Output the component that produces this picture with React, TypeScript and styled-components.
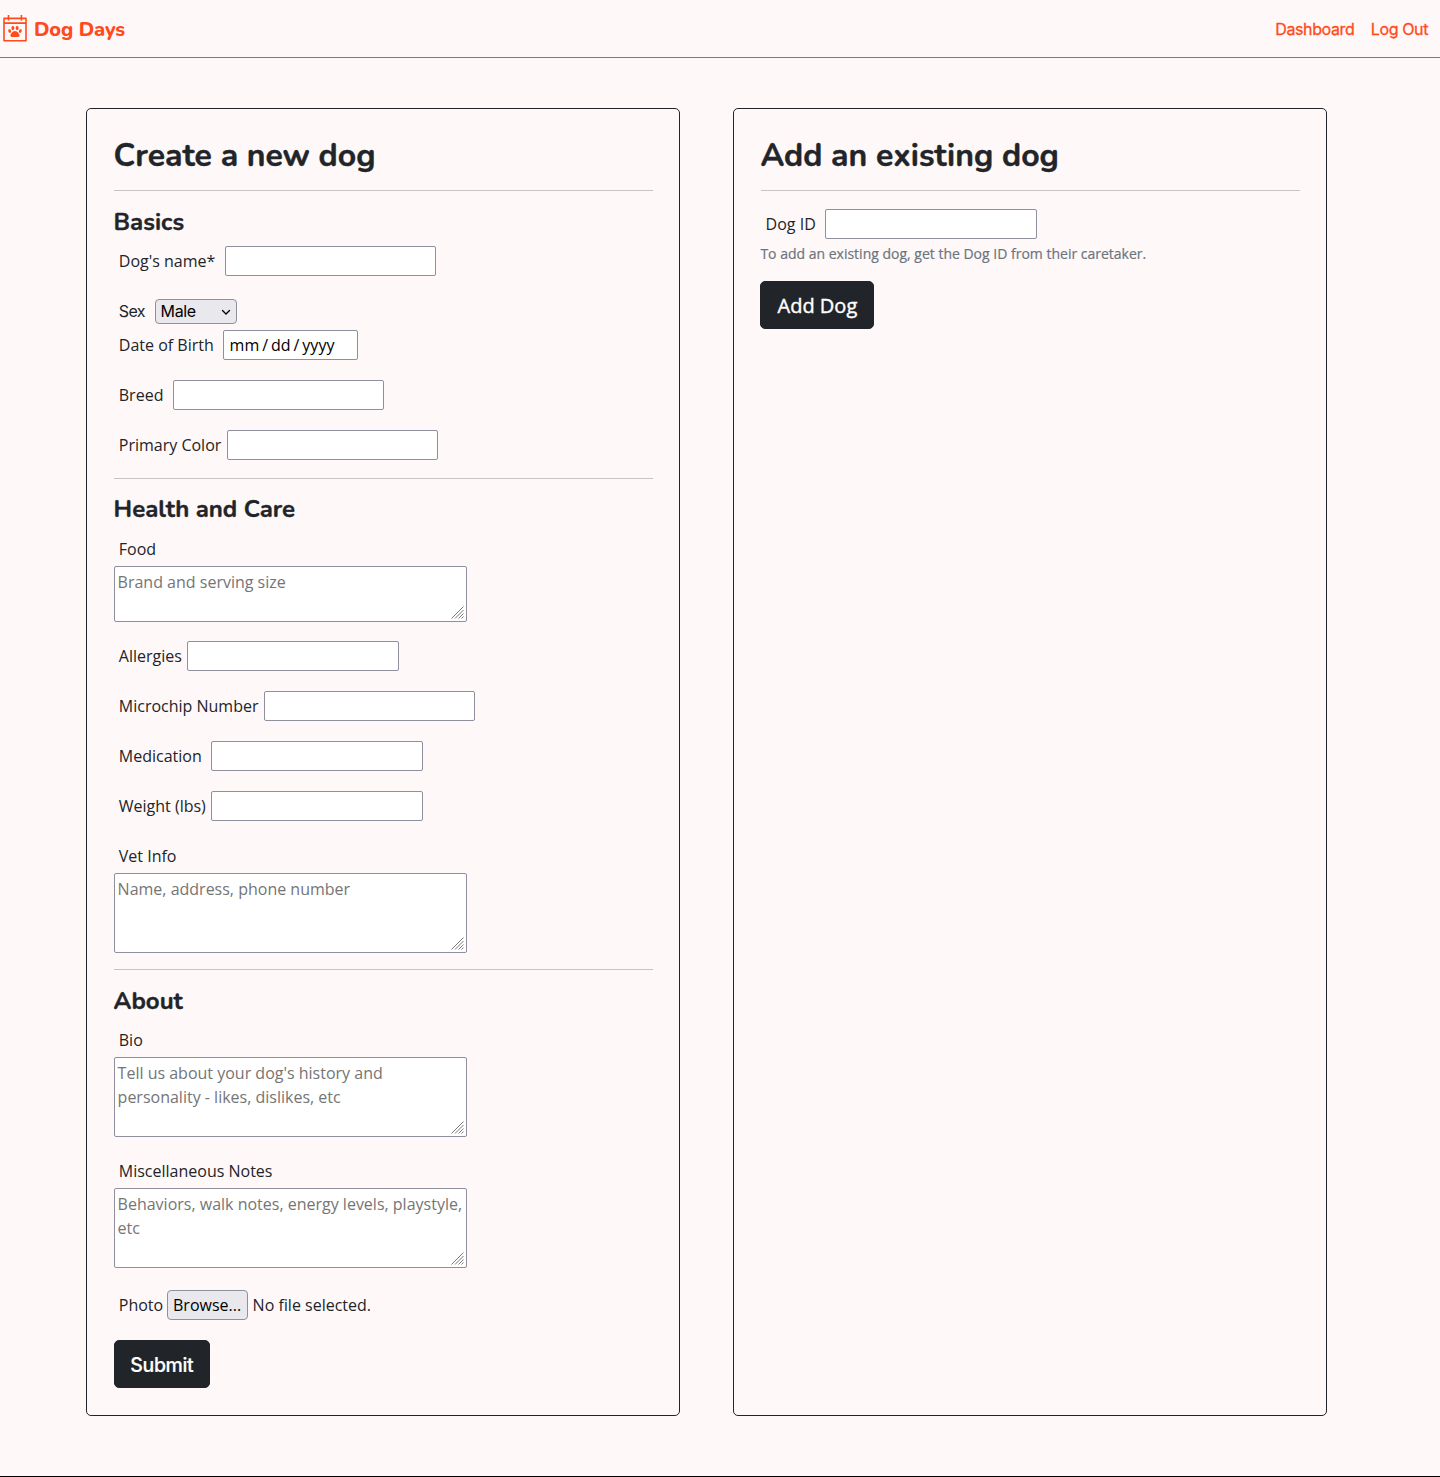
import React, { useRef } from "react";
import styled, { createGlobalStyle } from "styled-components";

const ORANGE = "#ff4a1c";
const INK = "#212529";
const PAGE = "#fff8f8";
const BODY = '"Open Sans", "Noto Sans", sans-serif';
const UI = 'Inter, "Liberation Sans", sans-serif';
const DISPLAY = 'Nunito, Lato, sans-serif';

const GlobalStyle = createGlobalStyle`
  *, *::before, *::after { box-sizing: border-box; }
  body {
    margin: 0;
    background: ${PAGE};
    color: ${INK};
    font: 400 16px/24px ${BODY};
  }
`;

const Page = styled.div`
  display: flex;
  flex-direction: column;
  height: 1477px;
  border-bottom: 1px solid #000;
`;

const Header = styled.header`
  display: flex;
  align-items: center;
  justify-content: space-between;
  height: 58px;
  padding: 0 12px 0 1px;
  border-bottom: 1px solid ${ORANGE};
  color: ${ORANGE};
`;

const Brand = styled.a`
  display: flex;
  align-items: center;
  gap: 5px;
  color: inherit;
  text-decoration: none;
`;

const BrandName = styled.span`
  padding-top: 2px;
  font: 800 20px/30px ${DISPLAY};
  letter-spacing: -0.12px;
`;

const Nav = styled.nav`
  display: flex;
  gap: 16.4px;
`;

const NavLink = styled.a`
  color: inherit;
  text-decoration: none;
  font: 400 16px/24px ${UI};
  letter-spacing: -0.38px;
  -webkit-text-stroke: 0.3px ${ORANGE};
`;

const Columns = styled.main`
  display: flex;
  gap: 52.8px;
  padding: 50px 0 0 86px;
`;

const Card = styled.section`
  width: 594px;
  height: 1308px;
  padding: 25px 26px 25px 26.6px;
  border: 1px solid ${INK};
  border-radius: 5px;
`;

const Title = styled.h1`
  margin: 0;
  height: 56px;
  padding-top: 1px;
  font: 700 32px/42px ${DISPLAY};
  -webkit-text-stroke: 0.4px ${INK};
`;

const Heading = styled.h2`
  margin: 0;
  font: 700 24px/30px ${DISPLAY};
  -webkit-text-stroke: 0.35px ${INK};
`;

const Rule = styled.hr<{ $after: number }>`
  margin: 0 0 ${(p) => p.$after}px 0.2px;
  border: 0;
  border-top: 1px solid #c8c4c5;
`;

const Row = styled.div<{ $after?: number; $height?: number }>`
  display: flex;
  align-items: center;
  height: ${(p) => p.$height ?? 30}px;
  margin-bottom: ${(p) => p.$after ?? 20}px;
`;

const Label = styled.label<{ $width?: number }>`
  flex: none;
  width: ${(p) => (p.$width ? `${p.$width}px` : "auto")};
  padding-left: 5.2px;
  white-space: nowrap;
`;

const SelectLabel = styled(Label)`
  font: 400 16px/23px ${UI};
  letter-spacing: -0.6px;
`;

const TextInput = styled.input<{ $width?: number }>`
  width: ${(p) => p.$width ?? 211.4}px;
  height: 30px;
  padding: 1px 6px;
  border: 1px solid #8f8f9d;
  border-radius: 2px;
  background: #fff;
  color: #000;
  font: 400 16px/24px ${BODY};
  word-spacing: -1.2px;
  outline: 0;
`;

const SelectBox = styled.button`
  display: flex;
  align-items: center;
  justify-content: space-between;
  width: 82px;
  height: 25px;
  padding: 0 5px;
  border: 1px solid #8f8f9d;
  border-radius: 4px;
  background: #e9e9ed;
  color: #000;
  font: 400 16px/23px ${UI};
  letter-spacing: -0.4px;
`;

const AreaFrame = styled.div<{ $height: number; $after: number }>`
  position: relative;
  width: 353px;
  height: ${(p) => p.$height}px;
  margin-bottom: ${(p) => p.$after}px;
`;

const Area = styled.textarea`
  display: block;
  width: 100%;
  height: 100%;
  padding: 3px 3px;
  border: 1px solid #8f8f9d;
  border-radius: 2px;
  background: #fff;
  font: 400 16px/24px ${BODY};
  resize: none;
  overflow: hidden;
  outline: 0;
  &::placeholder { color: #757575; opacity: 1; }
`;

const Grip = styled.svg`
  position: absolute;
  right: 2.6px;
  bottom: 3px;
`;

const FileButton = styled.button`
  width: 81px;
  height: 30px;
  margin-right: 5px;
  padding: 0;
  border: 1px solid #8f8f9d;
  border-radius: 4px;
  background: #e9e9ed;
  color: #000;
  font: 400 16px/24px ${BODY};
`;

const Action = styled.button<{ $width: number; $ui?: boolean }>`
  display: block;
  width: ${(p) => p.$width}px;
  height: 48px;
  padding: ${(p) => (p.$ui ? 2 : 1)}px 0 0;
  border: 1px solid ${INK};
  border-radius: 5px;
  background: ${INK};
  color: #fff;
  font: ${(p) => (p.$ui ? `500 19.5px/30px ${UI}` : `400 20px/30px ${BODY}`)};
  letter-spacing: ${(p) => (p.$ui ? -0.4 : 0)}px;
  -webkit-text-stroke: ${(p) => (p.$ui ? 0.2 : 0.4)}px #fff;
`;

const Hint = styled.p`
  margin: 0 0 17px;
  color: #6c757d;
  font-size: 14px;
  line-height: 21px;
  -webkit-text-stroke: 0.2px #6c757d;
`;

function Logo() {
  return (
    <svg width="28" height="30" viewBox="0 0 28 30" fill="none" stroke={ORANGE} strokeWidth="1.6">
      <path d="M3 4.4h22v22.3H3zM3 9.1h22M7.5 1v5.4M20.4 1v5.4" strokeLinejoin="round" />
      <g fill={ORANGE} stroke="none">
        <ellipse cx="11.9" cy="14.1" rx="1.5" ry="2.1" />
        <ellipse cx="16.1" cy="14.1" rx="1.5" ry="2.1" />
        <ellipse cx="8.7" cy="17.1" rx="1.4" ry="1.9" transform="rotate(-22 8.7 17.1)" />
        <ellipse cx="19.3" cy="17.1" rx="1.4" ry="1.9" transform="rotate(22 19.3 17.1)" />
        <path d="M14 16.9c2.4 0 4.6 2.9 4.6 4.6 0 1.9-2 1.6-4.6 1.6s-4.6.3-4.6-1.6c0-1.7 2.2-4.6 4.6-4.6z" />
      </g>
    </svg>
  );
}

function Field({ label, width, after }: { label: string; width: number; after?: number }) {
  return (
    <Row $after={after}>
      <Label $width={width}>{label}</Label>
      <TextInput aria-label={label} />
    </Row>
  );
}

function AreaField({ label, placeholder, height, after }: { label: string; placeholder: string; height: number; after: number }) {
  return (
    <>
      <Row $height={24} $after={5}>
        <Label>{label}</Label>
      </Row>
      <AreaFrame $height={height} $after={after}>
        <Area placeholder={placeholder} aria-label={label} />
        <Grip width="13" height="13" viewBox="0 0 13 13" stroke="#77777c" strokeWidth="1">
          <path d="M0.5 12.5l12-12M4 12.5l8.5-8.5M7.5 12.5l5-5M10.5 12.5l2-2" />
        </Grip>
      </AreaFrame>
    </>
  );
}

export default function App() {
  const file = useRef<HTMLInputElement>(null);
  return (
    <>
      <GlobalStyle />
      <Page>
        <Header>
          <Brand href="#">
            <Logo />
            <BrandName>Dog Days</BrandName>
          </Brand>
          <Nav>
            <NavLink href="#">Dashboard</NavLink>
            <NavLink href="#">Log Out</NavLink>
          </Nav>
        </Header>
        <Columns>
          <Card>
            <Title>Create a new dog</Title>
            <Rule $after={16} />
            <Heading>Basics</Heading>
            <Row $height={9} $after={0} />
            <Field label="Dog's name*" width={111} after={23} />
            <Row $height={25} $after={6}>
              <SelectLabel $width={41}>Sex</SelectLabel>
              <SelectBox>
                Male
                <svg width="10" height="10" viewBox="0 0 10 10" fill="none" stroke="#000" strokeWidth="1.4" strokeLinecap="round" strokeLinejoin="round">
                  <path d="M1.5 3.5L5 7l3.5-3.5" />
                </svg>
              </SelectBox>
            </Row>
            <Row>
              <Label $width={109}>Date of Birth</Label>
              <TextInput $width={135} defaultValue="mm / dd / yyyy" aria-label="Date of Birth" />
            </Row>
            <Field label="Breed" width={59} />
            <Field label="Primary Color" width={113} after={18} />
            <Rule $after={15} />
            <Heading>Health and Care</Heading>
            <Row $height={13} $after={0} />
            <AreaField label="Food" placeholder="Brand and serving size" height={56} after={19} />
            <Field label="Allergies" width={73.6} />
            <Field label="Microchip Number" width={150} />
            <Field label="Medication" width={97.6} />
            <Field label="Weight (lbs)" width={97.6} after={23} />
            <AreaField label="Vet Info" placeholder="Name, address, phone number" height={80} after={16} />
            <Rule $after={16} />
            <Heading>About</Heading>
            <Row $height={12} $after={0} />
            <AreaField label="Bio" placeholder="Tell us about your dog's history and personality - likes, dislikes, etc" height={80} after={22} />
            <AreaField label="Miscellaneous Notes" placeholder="Behaviors, walk notes, energy levels, playstyle, etc" height={80} after={22} />
            <Row>
              <Label $width={53}>Photo</Label>
              <FileButton onClick={() => file.current?.click()}>Browse...</FileButton>
              <span>No file selected.</span>
              <input ref={file} type="file" hidden />
            </Row>
            <Action $width={96.4} $ui>Submit</Action>
          </Card>
          <Card>
            <Title>Add an existing dog</Title>
            <Rule $after={18} />
            <Field label="Dog ID" width={64.8} after={4} />
            <Hint>To add an existing dog, get the Dog ID from their caretaker.</Hint>
            <Action $width={114}>Add Dog</Action>
          </Card>
        </Columns>
      </Page>
    </>
  );
}
